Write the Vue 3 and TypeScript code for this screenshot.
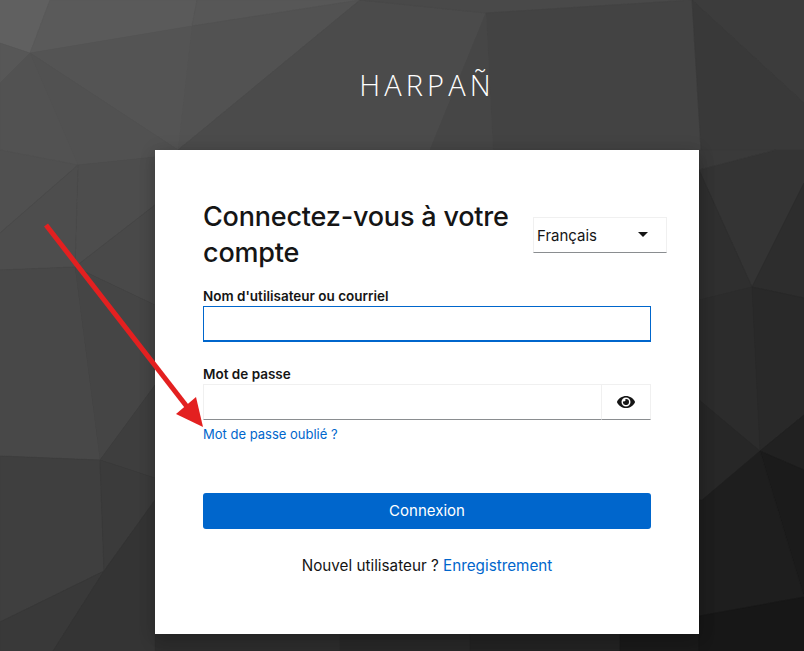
<script setup lang="ts">
interface Facet { points: string; fill: string }

const facets: Facet[] = [
  { points: '0,0 804,0 804,170 0,170', fill: '#4a4a4a' },
  { points: '0,0 50,0 30,53 0,43', fill: '#606060' },
  { points: '0,43 30,53 0,83', fill: '#575757' },
  { points: '50,0 197,0 192,26 30,53', fill: '#5a5a5a' },
  { points: '197,0 360,0 192,26', fill: '#575757' },
  { points: '192,26 360,0 178,150', fill: '#525252' },
  { points: '30,53 192,26 178,150', fill: '#545454' },
  { points: '30,53 178,150 155,157 78,165', fill: '#515151' },
  { points: '0,83 30,53 78,165 0,150', fill: '#525252' },
  { points: '360,0 486,13 430,150 178,150', fill: '#4b4b4b' },
  { points: '360,0 692,0 486,13', fill: '#494949' },
  { points: '486,13 692,0 701,150 493,150', fill: '#434343' },
  { points: '486,13 493,150 430,150', fill: '#464646' },
  { points: '692,0 804,0 804,103', fill: '#3c3c3c' },
  { points: '692,0 804,103 804,150 701,150', fill: '#393939' },
  { points: '0,150 78,165 0,233', fill: '#505050' },
  { points: '78,165 155,157 155,205 75,267', fill: '#4d4d4d' },
  { points: '0,233 78,165 75,267 0,270', fill: '#4d4d4d' },
  { points: '75,267 155,205 155,305', fill: '#494949' },
  { points: '75,267 155,305 155,385 100,460', fill: '#454545' },
  { points: '0,270 75,267 100,460 0,456', fill: '#484848' },
  { points: '100,460 155,385 155,478', fill: '#3e3e3e' },
  { points: '0,456 100,460 104,571 0,622', fill: '#3f3f3f' },
  { points: '100,460 155,478 155,500 104,571', fill: '#3b3b3b' },
  { points: '0,622 104,571 53,651 0,651', fill: '#393939' },
  { points: '104,571 155,500 155,651 53,651', fill: '#343434' },
  { points: '155,630 340,630 340,651 155,651', fill: '#2d2d2d' },
  { points: '340,630 470,630 470,651 340,651', fill: '#282828' },
  { points: '470,630 620,630 620,651 470,651', fill: '#232323' },
  { points: '620,630 699,630 699,651 620,651', fill: '#1a1a1a' },
  { points: '699,150 776,150 699,170', fill: '#3a3a3a' },
  { points: '699,170 776,150 804,150 804,183 752,287', fill: '#343434' },
  { points: '699,170 752,287 699,300', fill: '#2f2f2f' },
  { points: '804,183 804,298 752,287', fill: '#2d2d2d' },
  { points: '699,300 752,287 760,451 699,400', fill: '#2c2c2c' },
  { points: '752,287 804,298 804,415 760,451', fill: '#292929' },
  { points: '699,400 760,451 702,500 699,500', fill: '#272727' },
  { points: '804,415 804,470 760,451', fill: '#212121' },
  { points: '760,451 804,470 804,597', fill: '#1b1b1b' },
  { points: '699,500 702,500 760,451 804,597 699,616', fill: '#1e1e1e' },
  { points: '699,616 804,597 804,651 699,651', fill: '#171717' },
]
</script>

<template>
  <div class="page">
    <svg class="backdrop" width="804" height="651" viewBox="0 0 804 651" aria-hidden="true">
      <polygon v-for="(f, i) in facets" :key="i" :points="f.points" :fill="f.fill" :stroke="f.fill" stroke-width="0.5" />
    </svg>

    <div class="column">
      <header class="brand">HARPAÑ</header>

      <main class="card">
        <div class="card-head">
          <h1>Connectez-vous à votre compte</h1>
          <div class="lang">
            <span>Français</span>
            <i class="caret"></i>
          </div>
        </div>

        <form class="form" @submit.prevent>
          <label class="label" for="user">Nom d'utilisateur ou courriel</label>
          <input id="user" class="field field-focus" type="text" />

          <label class="label label-second" for="pass">Mot de passe</label>
          <div class="pass-group">
            <input id="pass" class="field field-pass" type="password" />
            <button class="toggle" type="button" aria-label="Afficher le mot de passe">
              <svg width="18" height="16" viewBox="0 0 576 512" fill="#151515">
                <path d="M572.52 241.4C518.29 135.59 410.93 64 288 64S57.68 135.64 3.48 241.41a32.35 32.35 0 0 0 0 29.19C57.71 376.41 165.07 448 288 448s230.32-71.64 284.52-177.41a32.35 32.35 0 0 0 0-29.19zM288 400a144 144 0 1 1 144-144 143.93 143.93 0 0 1-144 144zm0-240a95.31 95.31 0 0 0-25.31 3.79 47.85 47.85 0 0 1-66.9 66.9A95.78 95.78 0 1 0 288 160z" />
              </svg>
            </button>
          </div>
          <a class="link forgot" href="#">Mot de passe oublié ?</a>

          <button class="submit" type="submit">Connexion</button>
        </form>

        <p class="signup">Nouvel utilisateur ? <a class="link" href="#">Enregistrement</a></p>
      </main>
    </div>

    <svg class="arrow" width="804" height="651" viewBox="0 0 804 651" aria-hidden="true">
      <line x1="46" y1="225" x2="188" y2="408" stroke="#e32020" stroke-width="5" />
      <polygon points="203,427 176,414 196,397" fill="#e32020" />
    </svg>
  </div>
</template>

<style>
html, body { margin: 0; padding: 0; background: #2a2a2a; }
</style>

<style scoped>
.page {
  position: relative;
  width: 804px;
  height: 651px;
  overflow: hidden;
  font-family: "Inter", "Liberation Sans", sans-serif;
  color: #151515;
}
.backdrop, .arrow {
  position: absolute;
  left: 0;
  top: 0;
}
.arrow { pointer-events: none; }
.column {
  position: relative;
  width: 544px;
  margin-left: 155px;
}
.brand {
  height: 150px;
  box-sizing: border-box;
  padding-top: 65px;
  text-align: center;
  font-family: "Open Sans", sans-serif;
  font-weight: 300;
  font-size: 29px;
  line-height: 40px;
  letter-spacing: 4.1px;
  color: #fff;
}
.card {
  height: 484px;
  box-sizing: border-box;
  padding: 49px 48px 0;
  background: #fff;
  box-shadow: 0 8px 16px rgba(3, 3, 3, 0.16), 0 0 16px rgba(3, 3, 3, 0.12);
}
.card-head {
  display: flex;
  align-items: center;
  margin-right: -16px;
  height: 72px;
}
h1 {
  flex: 1;
  margin: 0;
  font-size: 27px;
  line-height: 36px;
  font-weight: 500;
  letter-spacing: -0.2px;
}
.lang {
  position: relative;
  display: flex;
  align-items: center;
  width: 134px;
  height: 36px;
  box-sizing: border-box;
  padding-left: 3px;
  border: 1px solid #f0f0f0;
  border-bottom-color: #8a8d90;
  font-size: 15px;
}
.caret {
  position: absolute;
  right: 18px;
  top: 14px;
  border-left: 5px solid transparent;
  border-right: 5px solid transparent;
  border-top: 5px solid #151515;
}
.form {
  display: flex;
  flex-direction: column;
  margin-top: 15px;
}
.label {
  font-size: 13.5px;
  line-height: 20px;
  font-weight: 600;
}
.label-second { margin-top: 22px; }
.field {
  display: block;
  box-sizing: border-box;
  height: 36px;
  padding: 0 8px;
  background: #fff;
  outline: none;
  font: inherit;
}
.field-focus {
  width: 448px;
  border: 1px solid #06c;
  border-bottom: 2px solid #06c;
}
.pass-group {
  display: flex;
  width: 448px;
}
.field-pass {
  flex: 1;
  min-width: 0;
  border: 1px solid #f0f0f0;
  border-bottom-color: #8a8d90;
  border-right: 0;
}
.toggle {
  display: flex;
  align-items: center;
  justify-content: center;
  width: 50px;
  height: 36px;
  padding: 0;
  background: #fff;
  border: 1px solid #f0f0f0;
  border-bottom-color: #8a8d90;
}
.link {
  color: #06c;
  text-decoration: none;
}
.forgot {
  margin-top: 4px;
  font-size: 13px;
  line-height: 21px;
}
.submit {
  height: 36px;
  margin-top: 48px;
  padding: 0 0 2px;
  border: 0;
  border-radius: 3px;
  background: #06c;
  color: #fff;
  font: inherit;
  font-size: 15px;
}
.signup {
  margin: 25px 0 0;
  text-align: center;
  font-size: 15.25px;
  line-height: 24px;
}
</style>
